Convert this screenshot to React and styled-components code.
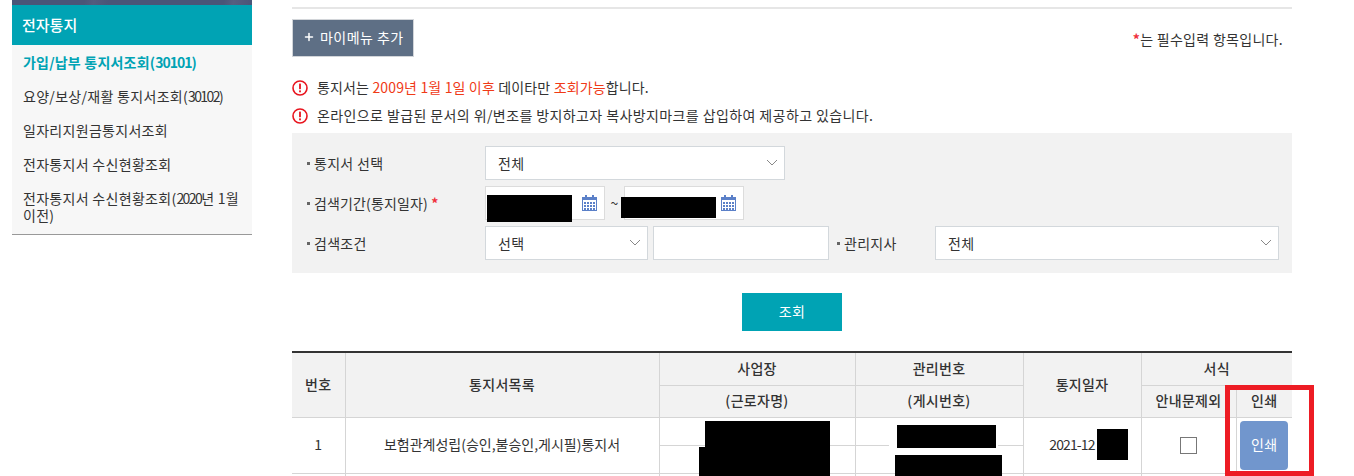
import React from 'react'
import styled, { createGlobalStyle } from 'styled-components'
import { Plus } from 'lucide-react'

const GlobalStyle = createGlobalStyle`
html, body {
  margin: 0;
  padding: 0;
  height: 476px;
  overflow: hidden;
  background: #fff;
}
body {
  font-family: "Noto Sans CJK KR", "Noto Sans", sans-serif;
  font-size: 14px;
  color: #333;
  letter-spacing: 0.3px;
}
* { box-sizing: border-box; }
`

const Page = styled.div`
display: flex;
align-items: flex-start;
width: 1354px;
height: 476px;
overflow: hidden;
position: relative;
padding-left: 12px;
`

const Sidebar = styled.aside`
width: 240px;
flex: none;
border-bottom: 1px solid #999;
`

const SideBand = styled.div`
height: 5px;
background: linear-gradient(100deg, #4a5578 0 30%, #525c7e 34%, #4a5578 40% 88%, #555f80 92%, #4a5578);
`

const SideTitle = styled.h2`
margin: 0;
height: 40px;
padding: 0 10px;
background: #00a3b4;
color: #fff;
font-size: 15px;
font-weight: 500;
letter-spacing: 0;
line-height: 40px;
`

const SideList = styled.ul`
list-style: none;
margin: 0;
padding: 0 0 2px;
background: #f7f7f7;
`

const SideItem = styled.li`
padding: 9px 7px 8px 11px;
line-height: 17px;
color: ${props => props.$active ? '#00a3b4' : '#333'};
font-weight: ${props => props.$active ? 700 : 400};
letter-spacing: ${props => props.$active ? '0.2px' : 'inherit'};
`

const Digits = styled.span`
letter-spacing: ${props => props.$active ? '-1px' : '-1.6px'};
`

const Content = styled.main`
width: 1000px;
flex: none;
margin-left: 40px;
padding-top: 7px;
`

const TopLine = styled.div`
height: 2px;
background: #e6e6e6;
`

const ActionRow = styled.div`
display: flex;
justify-content: space-between;
align-items: center;
margin-top: 10px;
`

const MenuButton = styled.button`
display: flex;
align-items: center;
gap: 5px;
width: 122px;
height: 38px;
padding: 0 0 2px 10px;
background: #5e6f85;
border: 1px solid #d2d5d9;
color: #fff;
font: inherit;
letter-spacing: 0.45px;
`

const RequiredNote = styled.p`
margin: 2px 9px 0 0;
line-height: 20px;
`

const Star = styled.span`
color: #f0303c;
font-weight: 700;
`

const NoticeList = styled.div`
margin-top: 17px;
`

const Notice = styled.p`
display: flex;
align-items: center;
gap: 9px;
margin: 0;
height: 28px;
line-height: 24px;
letter-spacing: ${props => props.$spacing}px;
`

const NoticeText = styled.span`
padding-bottom: 2px;
`

const Hot = styled.span`
color: #f03a17;
`

const SearchPanel = styled.section`
display: flex;
flex-direction: column;
gap: 6px;
margin-top: 3px;
padding: 13px 13px 13px 14px;
background: #f2f2f2;
`

const FormRow = styled.div`
display: flex;
align-items: center;
height: 34px;
`

const Label = styled.label`
display: flex;
align-items: center;
gap: 4px;
width: 179px;
padding: 0 0 1px 1px;
flex: none;

&::before {
  content: '';
  width: 3px;
  height: 3px;
  margin-top: 2px;
  background: #666;
}
`

const BranchLabel = styled(Label)`
width: 99px;
margin-left: 7px;
`

const PeriodLabel = styled.span`
letter-spacing: 0.15px;
`

const SelectBox = styled.div`
display: flex;
align-items: center;
justify-content: space-between;
width: ${props => props.$width}px;
height: 34px;
padding: 0 6px 1px 12px;
background: #fff;
border: 1px solid #d3d8dc;
flex: none;
`

const TextBox = styled.div`
width: ${props => props.$width}px;
height: 34px;
margin-left: 5px;
background: #fff;
border: 1px solid #d3d8dc;
flex: none;
`

const DateBox = styled.div`
position: relative;
display: flex;
align-items: center;
justify-content: flex-end;
width: 120px;
height: 34px;
padding: 0 7px 0 0;
background: #fff;
border: 1px solid #dcdcdc;
flex: none;
`

const Tilde = styled.span`
width: 19px;
text-align: center;
flex: none;
`

const Redact = styled.i`
position: absolute;
display: block;
background: #000;
left: ${props => props.$x}px;
top: ${props => props.$y}px;
width: ${props => props.$w}px;
height: ${props => props.$h}px;
box-shadow: ${props => props.$halo ? '-8px 0 0 #fff, 2px 0 0 #fff' : 'none'};
`

const SearchRow = styled.div`
display: flex;
justify-content: center;
margin-top: 20px;
`

const SearchButton = styled.button`
width: 100px;
height: 38px;
padding: 0 0 2px;
background: #00a3b4;
border: 0;
color: #fff;
font: inherit;
letter-spacing: inherit;
`

const Table = styled.table`
width: 1000px;
margin-top: 20px;
table-layout: fixed;
border-collapse: collapse;
border-top: 2px solid #333;

th, td {
  padding: 0 0 2px;
  border: 1px solid #d5d5d5;
  text-align: center;
  height: 32px;
}
thead tr:first-child th {
  height: 33px;
}
th {
  background: #f2f2f2;
  font-weight: 500;
}
td {
  height: 28px;
}
tr > :first-child { border-left: 0; }
tr > :last-child { border-right: 0; }
`

const TitleCell = styled.td`
letter-spacing: 0;
`

const RedactCell = styled.td`
position: relative;
`

const DateCell = styled(RedactCell)`
letter-spacing: -0.9px;
`

const Check = styled.span`
display: block;
width: 17px;
height: 17px;
margin: 2px auto 0;
background: #fff;
border: 1px solid #777;
`

const PrintButton = styled.button`
display: block;
width: 48px;
height: 49px;
margin: 2px auto 0;
padding: 0 0 2px;
background: #7196cd;
border: 0;
border-radius: 4px;
color: #fff;
font: inherit;
letter-spacing: inherit;
`

const Highlight = styled.div`
position: absolute;
left: 1225px;
top: 385px;
width: 89px;
height: 91px;
border: 5px solid #ed1c24;
pointer-events: none;
`

const Alert = () => (
  <svg width="16" height="16" viewBox="0 0 16 16" fill="none">
    <circle cx="8" cy="8" r="7" stroke="#e8141e" strokeWidth="1.6" />
    <rect x="7.1" y="3.6" width="1.8" height="5.6" fill="#e8141e" />
    <rect x="7.1" y="10.4" width="1.8" height="1.9" fill="#e8141e" />
  </svg>
)

const Chevron = () => (
  <svg width="12" height="7" viewBox="0 0 12 7" fill="none">
    <path d="M1 1l5 5 5-5" stroke="#888" strokeWidth="1" />
  </svg>
)

const Calendar = () => (
  <svg width="15" height="16" viewBox="0 0 15 16">
    <rect x="0.5" y="2.5" width="14" height="13" fill="#fff" stroke="#5b80c8" />
    <rect x="0" y="2" width="15" height="3" fill="#5b80c8" />
    <rect x="3" y="0" width="2" height="4" fill="#5b80c8" />
    <rect x="10" y="0" width="2" height="4" fill="#5b80c8" />
    {[2, 5, 8, 11].map(x => [7, 10, 13].map(y => (
      <rect key={`${x}-${y}`} x={x} y={y} width="2" height="2" fill="#5b80c8" />
    )))}
  </svg>
)

const App = () => {
  return (
    <Page>
      <GlobalStyle />
      <Sidebar>
        <SideBand />
        <SideTitle>전자통지</SideTitle>
        <SideList>
          <SideItem $active>가입/납부 통지서조회(<Digits $active>30101</Digits>)</SideItem>
          <SideItem>요양/보상/재활 통지서조회(<Digits>30102</Digits>)</SideItem>
          <SideItem>일자리지원금통지서조회</SideItem>
          <SideItem>전자통지서 수신현황조회</SideItem>
          <SideItem>전자통지서 수신현황조회(<Digits>2020</Digits>년 1월<br />이전)</SideItem>
        </SideList>
      </Sidebar>

      <Content>
        <TopLine />
        <ActionRow>
          <MenuButton><Plus size={12} strokeWidth={3} color="#fff" /> 마이메뉴 추가</MenuButton>
          <RequiredNote><Star>*</Star>는 필수입력 항목입니다.</RequiredNote>
        </ActionRow>

        <NoticeList>
          <Notice $spacing={0.15}><Alert /><NoticeText>통지서는 <Hot>2009년 1월 1일 이후</Hot> 데이타만 <Hot>조회가능</Hot>합니다.</NoticeText></Notice>
          <Notice $spacing={0.4}><Alert /><NoticeText>온라인으로 발급된 문서의 위/변조를 방지하고자 복사방지마크를 삽입하여 제공하고 있습니다.</NoticeText></Notice>
        </NoticeList>

        <SearchPanel>
          <FormRow>
            <Label>통지서 선택</Label>
            <SelectBox $width={300}>전체<Chevron /></SelectBox>
          </FormRow>
          <FormRow>
            <Label><PeriodLabel>검색기간(통지일자) <Star>*</Star></PeriodLabel></Label>
            <DateBox><Redact $x={1} $y={8} $w={85} $h={27} /><Calendar /></DateBox>
            <Tilde>~</Tilde>
            <DateBox><Redact $x={-4} $y={10} $w={95} $h={21} /><Calendar /></DateBox>
          </FormRow>
          <FormRow>
            <Label>검색조건</Label>
            <SelectBox $width={163}>선택<Chevron /></SelectBox>
            <TextBox $width={176} />
            <BranchLabel>관리지사</BranchLabel>
            <SelectBox $width={344}>전체<Chevron /></SelectBox>
          </FormRow>
        </SearchPanel>

        <SearchRow>
          <SearchButton>조회</SearchButton>
        </SearchRow>

        <Table>
          <colgroup>
            <col width="53" />
            <col width="314" />
            <col width="196" />
            <col width="168" />
            <col width="118" />
            <col width="95" />
            <col width="56" />
          </colgroup>
          <thead>
            <tr>
              <th rowSpan="2">번호</th>
              <th rowSpan="2">통지서목록</th>
              <th>사업장</th>
              <th>관리번호</th>
              <th rowSpan="2">통지일자</th>
              <th colSpan="2">서식</th>
            </tr>
            <tr>
              <th>(근로자명)</th>
              <th>(게시번호)</th>
              <th>안내문제외</th>
              <th>인쇄</th>
            </tr>
          </thead>
          <tbody>
            <tr>
              <td rowSpan="2">1</td>
              <TitleCell rowSpan="2">보험관계성립(승인,불승인,게시필)통지서</TitleCell>
              <RedactCell><Redact $x={45} $y={3} $w={125} $h={60} /><Redact $x={39} $y={29} $w={131} $h={34} /></RedactCell>
              <RedactCell><Redact $x={41} $y={7} $w={99} $h={23} $halo /><Redact $x={39} $y={37} $w={107} $h={30} /></RedactCell>
              <DateCell rowSpan="2">2021-12&nbsp;&nbsp;&nbsp;&nbsp;&nbsp;&nbsp;&nbsp;&nbsp;&nbsp;<Redact $x={73} $y={11} $w={31} $h={31} /></DateCell>
              <td rowSpan="2"><Check /></td>
              <td rowSpan="2"><PrintButton>인쇄</PrintButton></td>
            </tr>
            <tr>
              <td />
              <td />
            </tr>
            <tr>
              <td /><td /><td /><td /><td /><td /><td />
            </tr>
          </tbody>
        </Table>
      </Content>
      <Highlight />
    </Page>
  )
}

export default App
